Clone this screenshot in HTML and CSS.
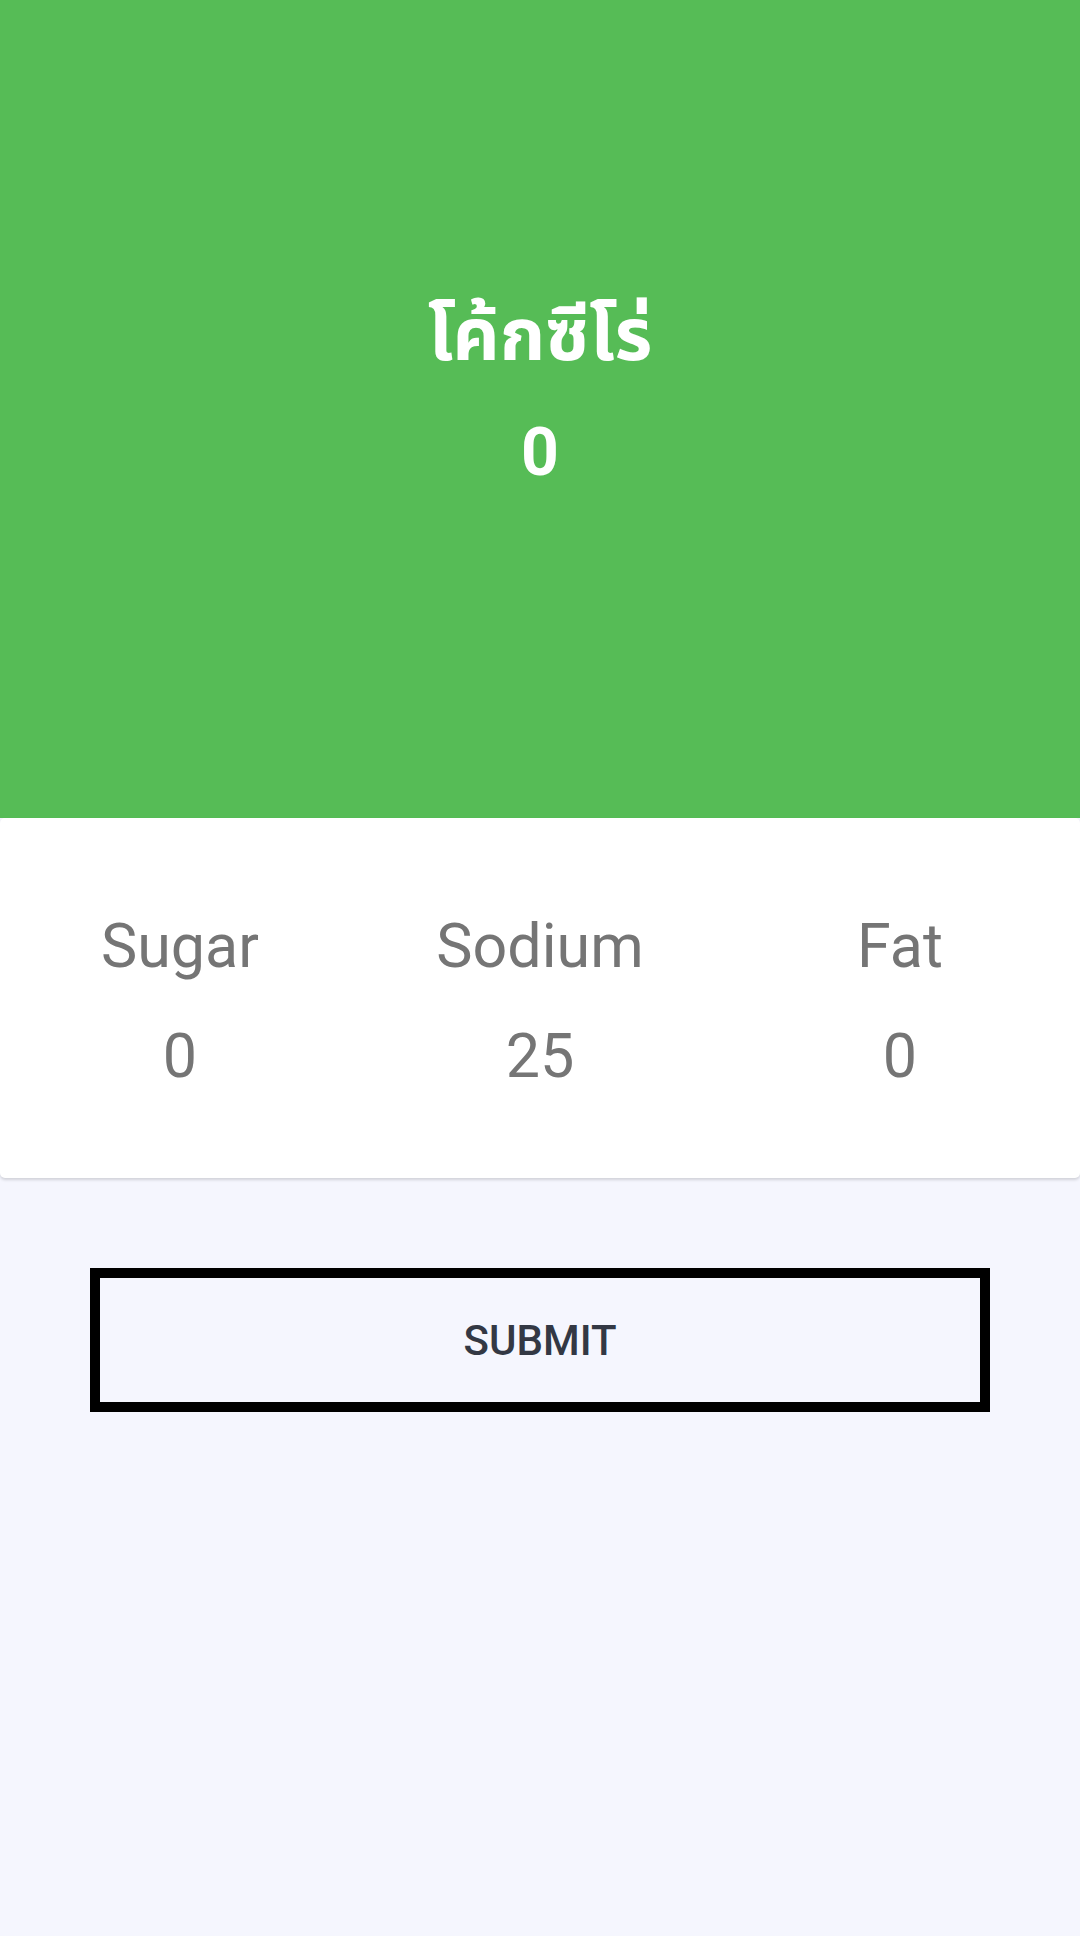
FILE: index.html
```html
<!DOCTYPE html>
<html lang="th">
<head>
<meta charset="utf-8">
<title>Product</title>
<link rel="stylesheet" href="styles.css">
</head>
<body>
<div class="screen">
  <header class="hero">
    <div class="hero-name">โค้กซีโร่</div>
    <div class="hero-value">0</div>
  </header>
  <section class="card">
    <div class="stat">
      <div class="stat-label">Sugar</div>
      <div class="stat-value">0</div>
    </div>
    <div class="stat">
      <div class="stat-label">Sodium</div>
      <div class="stat-value">25</div>
    </div>
    <div class="stat">
      <div class="stat-label">Fat</div>
      <div class="stat-value">0</div>
    </div>
  </section>
  <div class="actions">
    <button class="submit" type="button">SUBMIT</button>
  </div>
</div>
</body>
</html>
```
FILE: styles.css
```css
html, body {
  margin: 0;
  padding: 0;
}
body {
  background: #f5f6fe;
  font-family: Roboto, "Noto Sans Thai", "Noto Sans", sans-serif;
}
.screen {
  width: 1080px;
  min-height: 1936px;
  background: #f5f6fe;
}
.hero {
  height: 818px;
  box-sizing: border-box;
  background: #56bc56;
  color: #fff;
  display: flex;
  flex-direction: column;
  align-items: center;
  padding-top: 280px;
}
.hero-name {
  font-size: 73px;
  font-weight: 700;
  line-height: 110px;
}
.hero-value {
  font-size: 66px;
  font-weight: 700;
  line-height: 110px;
  margin-top: 8px;
}
.card {
  height: 360px;
  box-sizing: border-box;
  background: #fff;
  border-radius: 5px;
  box-shadow: 0 2px 3px rgba(0,0,0,0.15);
  display: grid;
  grid-template-columns: 1fr 1fr 1fr;
  align-content: center;
  padding-top: 5px;
  color: #757575;
  position: relative;
}
.stat {
  display: flex;
  flex-direction: column;
  align-items: center;
  gap: 38px;
}
.stat-label, .stat-value {
  font-size: 61px;
  line-height: 72px;
}
.actions {
  padding: 90px 90px 0;
}
.submit {
  display: block;
  width: 100%;
  height: 144px;
  box-sizing: border-box;
  border: 10px solid #000;
  background: transparent;
  font-family: Roboto, sans-serif;
  font-size: 42px;
  font-weight: 500;
  color: #333844;
  padding: 0;
}
```
